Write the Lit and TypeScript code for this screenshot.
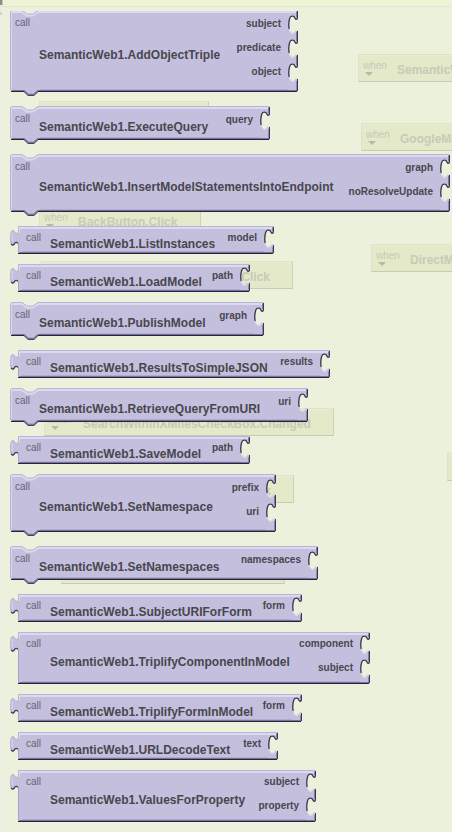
import { LitElement, html, svg, css, nothing } from "lit";
import { customElement, property } from "lit/decorators.js";
import { classMap } from "lit/directives/class-map.js";
import { styleMap } from "lit/directives/style-map.js";

type Kind = "stack" | "value";

interface BlockSpec {
  kind: Kind;
  name: string;
  width: number;
  args: string[];
}

interface EventSpec {
  x: number;
  y: number;
  width: number;
  when: boolean;
  name: string;
}

const BLOCKS: BlockSpec[] = [
  { kind: "stack", name: "AddObjectTriple", width: 288, args: ["subject", "predicate", "object"] },
  { kind: "stack", name: "ExecuteQuery", width: 260, args: ["query"] },
  { kind: "stack", name: "InsertModelStatementsIntoEndpoint", width: 440, args: ["graph", "noResolveUpdate"] },
  { kind: "value", name: "ListInstances", width: 264, args: ["model"] },
  { kind: "value", name: "LoadModel", width: 240, args: ["path"] },
  { kind: "stack", name: "PublishModel", width: 254, args: ["graph"] },
  { kind: "value", name: "ResultsToSimpleJSON", width: 320, args: ["results"] },
  { kind: "stack", name: "RetrieveQueryFromURI", width: 298, args: ["uri"] },
  { kind: "value", name: "SaveModel", width: 240, args: ["path"] },
  { kind: "stack", name: "SetNamespace", width: 266, args: ["prefix", "uri"] },
  { kind: "stack", name: "SetNamespaces", width: 308, args: ["namespaces"] },
  { kind: "value", name: "SubjectURIForForm", width: 292, args: ["form"] },
  { kind: "value", name: "TriplifyComponentInModel", width: 360, args: ["component", "subject"] },
  { kind: "value", name: "TriplifyFormInModel", width: 292, args: ["form"] },
  { kind: "value", name: "URLDecodeText", width: 268, args: ["text"] },
  { kind: "value", name: "ValuesForProperty", width: 306, args: ["subject", "property"] },
];

// Event handlers lying on the workspace canvas underneath the open drawer.
const EVENTS: EventSpec[] = [
  { x: 358, y: 54, width: 210, when: true, name: "SemanticWeb1.Result" },
  { x: 361, y: 123, width: 210, when: true, name: "GoogleMaps.Click" },
  { x: 39, y: 101, width: 170, when: false, name: "" },
  { x: 39, y: 206, width: 162, when: true, name: "BackButton.Click" },
  { x: 41, y: 261, width: 252, when: false, name: "Click" },
  { x: 371, y: 244, width: 210, when: true, name: "DirectMap.Click" },
  { x: 44, y: 408, width: 290, when: true, name: "SearchWithinXMilesCheckBox.Changed" },
  { x: 447, y: 453, width: 160, when: false, name: "" },
  { x: 42, y: 475, width: 252, when: false, name: "Click" },
  { x: 61, y: 556, width: 224, when: false, name: "" },
];

@customElement("call-block")
export class CallBlock extends LitElement {
  @property({ attribute: false }) spec!: BlockSpec;

  static styles = css`
    :host {
      display: block;
    }
    .block {
      position: relative;
      box-sizing: border-box;
      display: flex;
      color: #47474d;
    }
    .stack {
      padding: 2px 17px 0 5px;
    }
    .value {
      padding: 0 17px 0 16px;
    }
    .shape {
      position: absolute;
      inset: 0;
      display: flex;
      align-items: flex-start;
    }
    .cap {
      display: block;
      flex: none;
    }
    .fill {
      flex: 1;
      align-self: stretch;
      background: #c4bfdd;
      box-shadow: inset 0 1px #b9b4dc, inset 0 3px #dddaef, inset 0 -1px #26233a,
        inset 0 -2px #77729a, inset 0 -3px #b0abcf;
    }
    .stack .fill {
      margin-bottom: 4px;
    }
    .call,
    .name,
    .args {
      position: relative;
    }
    .call {
      width: 24px;
      font-size: 10px;
      line-height: 22px;
      color: #66646f;
    }
    .value .call {
      line-height: 24px;
    }
    .name {
      align-self: center;
      padding-top: 2px;
      font-size: 12px;
      font-weight: bold;
      line-height: 14px;
    }
    .value .name {
      padding-top: 7px;
    }
    .args {
      display: flex;
      flex-direction: column;
      flex: 1;
      padding-bottom: 12px;
      text-align: right;
      font-size: 10px;
      font-weight: bold;
      line-height: 24px;
    }
    .value .args {
      padding-bottom: 4px;
    }
  `;

  private leftCap(kind: Kind, h: number) {
    if (kind === "stack") {
      return html`<svg class="cap" width="30" height=${h + 4} viewBox="0 0 30 ${h + 4}" aria-hidden="true">
        ${svg`
          <path fill="#c4bfdd" d="M0 2 L2 0 H12 L17 4 H23 L28 0 H30 V${h} H28 L24 ${h + 4} H18 L14 ${h} H2 L0 ${h - 2} Z"/>
          <path fill="none" stroke="#dddaef" stroke-width="2" d="M1 2 H12 L17 5.5 H23 L28 2 H30"/>
          <path fill="none" stroke="#b9b4dc" d="M.5 ${h - 2} V2 L2 .5 H12 L17 4 H23 L28 .5 H30"/>
          <path fill="none" stroke="#d8d5ec" d="M1.5 3 V${h - 3}"/>
          <path fill="none" stroke="#77729a" d="M2 ${h - 1.5} H14.5 L18.5 ${h + 2.2} H23.5 L27.5 ${h - 1.5} H30"/>
          <path fill="none" stroke="#26233a" d="M1 ${h - 0.5} H14 L18 ${h + 3.3} H24 L28 ${h - 0.5} H30"/>
        `}
      </svg>`;
    }
    return html`<svg class="cap" width="12" height=${h} viewBox="0 0 12 ${h}" aria-hidden="true">
      ${svg`
        <path fill="#c4bfdd" d="M8 0 H12 V${h} H8 V18 C7.5 16 5.6 16 4.9 17.5 C4 20 1.5 20.4 .8 18 C-.2 15.5 -.2 9 .8 6 C1.5 3.6 4 3.6 4.9 6 C5.6 7.4 7.5 7.4 8 5 Z"/>
        <path fill="none" stroke="#dddaef" stroke-width="2" d="M9 2 H12"/>
        <path fill="none" stroke="#b9b4dc" d="M12 .5 H8.5 V5.4 C8 8 5.4 8 4.6 6.2 C3.8 4.2 2 4 1.3 6 C.3 9 .3 15 1.2 17.4"/>
        <path fill="none" stroke="#dedbf0" d="M2.4 7 C2 9 2 12 2.4 15 M9.5 3 V7"/>
        <path fill="none" stroke="#3a3654" stroke-width="1.3" d="M1.2 17.8 C2 19.8 3.6 19.4 4.5 17.6 C5.2 16 7.2 15.8 8 17.6"/>
        <path fill="none" stroke="#a8a3cc" d="M8.5 18 V${h - 2}"/>
        <path fill="none" stroke="#77729a" d="M9 ${h - 1.5} H12"/>
        <path fill="none" stroke="#26233a" d="M8 ${h - 0.5} H12"/>
      `}
    </svg>`;
  }

  private rightCap(kind: Kind, h: number, count: number) {
    const first = kind === "stack" ? 6 : 4;
    const tops = Array.from({ length: count }, (_, i) => first + 24 * i);
    const sockets = tops
      .map(
        (s) =>
          `V${s + 1.5} C9.6 ${s + 4.2} 7.4 ${s + 4.2} 6.6 ${s + 2} C6 ${s - 0.2} 3 ${s - 0.2} 2 ${s + 2}` +
          ` C.7 ${s + 5} .7 ${s + 12} 2 ${s + 15} C3 ${s + 17.6} 5.6 ${s + 17.4} 6.6 ${s + 15.6} C7.4 ${s + 14} 9.2 ${s + 14} 10 ${s + 15}`
      )
      .join(" ");
    const start = kind === "stack" ? "M0 0 H9 L10 1" : "M0 0 H10";
    return html`<svg class="cap" width="10" height=${h} viewBox="0 0 10 ${h}" aria-hidden="true">
      ${svg`
        <path fill="#c4bfdd" d="${start} ${sockets} V${h - 1} L9 ${h} H0 Z"/>
        <path fill="none" stroke="#dddaef" stroke-width="2" d="M0 2 H8"/>
        <path fill="none" stroke="#b9b4dc" d="M0 .5 H9"/>
        <path fill="none" stroke="#77729a" d="M0 ${h - 1.5} H9"/>
        <path fill="none" stroke="#26233a" d="M0 ${h - 0.5} H9"/>
        ${tops.map((s, i) => {
          const from = i === 0 ? 1 : s - 9;
          const last = i === count - 1;
          return svg`
            <path fill="none" stroke="#8d88b0" d="M8.5 ${from + 1} V${s + 1}"/>
            <path fill="none" stroke="#3a3654" stroke-width="1.3" d="M9.5 ${from} V${s + 1.5} C9.2 ${s + 3.8} 7.6 ${s + 3.8} 6.8 ${s + 1.8} C6 ${s - 0.4} 2.8 ${s - 0.4} 1.8 ${s + 2} C.8 ${s + 5} .6 ${s + 10} 1.2 ${s + 13}"/>
            <path fill="none" stroke="#dedbef" d="M1.3 ${s + 13.4} C2.4 ${s + 18.6} 5.6 ${s + 18.4} 7 ${s + 16} C7.6 ${s + 14.8} 8.6 ${s + 14.8} 9.2 ${s + 15.6}"/>
            ${last ? svg`<path fill="none" stroke="#3a3654" d="M9.5 ${s + 15} V${h - 1}"/><path fill="none" stroke="#8d88b0" d="M8.5 ${s + 17} V${h - 2}"/>` : nothing}
          `;
        })}
      `}
    </svg>`;
  }

  render() {
    const { kind, name, width, args } = this.spec;
    const h = (kind === "stack" ? 10 : 4) + 24 * args.length;
    return html`
      <div class=${classMap({ block: true, [kind]: true })} style=${styleMap({ width: `${width}px` })}>
        <div class="shape">
          ${this.leftCap(kind, h)}
          <div class="fill"></div>
          ${this.rightCap(kind, h, args.length)}
        </div>
        <span class="call">call</span>
        <span class="name">SemanticWeb1.${name}</span>
        <span class="args">${args.map((a) => html`<span>${a}</span>`)}</span>
      </div>
    `;
  }
}

@customElement("app-root")
export class AppRoot extends LitElement {
  static styles = css`
    :host {
      display: block;
      position: relative;
      min-height: 100vh;
      overflow: hidden;
      background: #ecf1dc;
      font-family: "Liberation Sans", Arial, sans-serif;
      white-space: nowrap;
    }
    .bar {
      height: 6px;
      background: #edf4d3;
      border-bottom: 1px solid #e2e4d8;
    }
    .handle {
      width: 2px;
      height: 5px;
      background: #8c8c88;
      border-right: 1px solid #c4c6b8;
    }
    .canvas {
      position: absolute;
      inset: 7px 0 0 0;
      box-shadow: inset 2px 0 #edeee3;
    }
    .arrow {
      position: absolute;
      left: 0;
      top: 5px;
      width: 2px;
      height: 3px;
      background: #d4d6ca;
    }
    .event {
      position: absolute;
      box-sizing: border-box;
      height: 28px;
      margin-top: -7px;
      padding: 0 22px 0 4px;
      display: flex;
      background: #e3e9c9;
      border: 1px solid #dde3c5;
      border-right-color: #cdd3b6;
      border-bottom-color: #c6cbb2;
      box-shadow: inset 0 1px #e9eed2;
      color: #c8cbb6;
    }
    .when {
      width: 34px;
      font-size: 10px;
      line-height: 12px;
      padding-top: 5px;
    }
    .when::after {
      content: "";
      display: block;
      width: 0;
      margin: 0 0 0 2px;
      border: 4px solid transparent;
      border-top-color: #b6baa4;
      border-bottom: 0;
    }
    .title {
      padding-top: 8px;
      font-size: 12px;
      font-weight: bold;
      line-height: 14px;
    }
    .end {
      margin-left: auto;
    }
    .drawer {
      position: relative;
      margin-top: 4px;
      overflow: hidden;
    }
    .list {
      list-style: none;
      margin: -1px 0 0;
      padding: 0 0 10px 10px;
      display: flex;
      flex-direction: column;
      gap: 10px;
    }
  `;

  render() {
    return html`
      <div class="bar"><div class="handle"></div></div>
      <div class="canvas">
        <div class="arrow"></div>
        ${EVENTS.map(
          (e) => html`<div class="event" style=${styleMap({ left: `${e.x}px`, top: `${e.y}px`, width: `${e.width}px` })}>
            ${e.when ? html`<span class="when">when</span>` : nothing}
            <span class=${classMap({ title: true, end: !e.when })}>${e.name}</span>
          </div>`
        )}
      </div>
      <div class="drawer">
        <ul class="list">
          ${BLOCKS.map((b) => html`<li><call-block .spec=${b}></call-block></li>`)}
        </ul>
      </div>
    `;
  }
}
